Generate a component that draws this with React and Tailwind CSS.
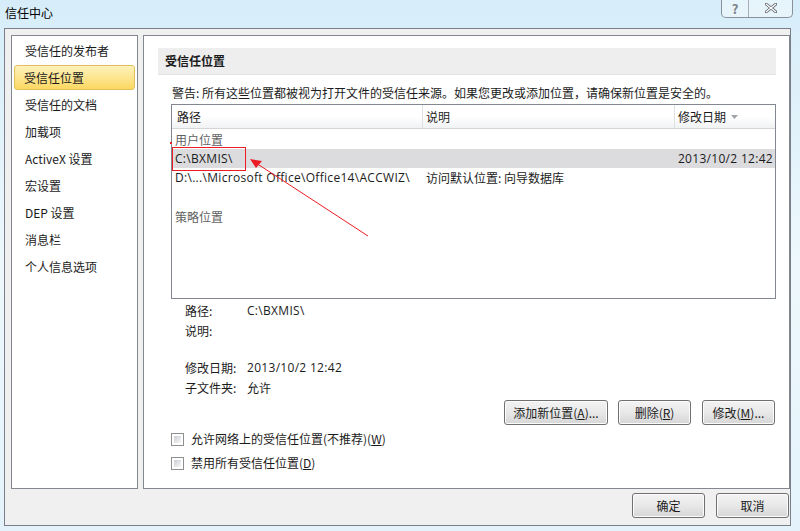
import { useState } from "react";

const navItems = [
	"受信任的发布者",
	"受信任位置",
	"受信任的文档",
	"加载项",
	"ActiveX 设置",
	"宏设置",
	"DEP 设置",
	"消息栏",
	"个人信息选项",
];

// latin text in the dialog is a bit wider than the CJK font's own latin glyphs
const latin = "font-['Open_Sans'] tracking-[0.3px]";

function Button({ className, children }) {
	return (
		<div
			className={
				"h-[25px] flex items-center justify-center rounded-[3px] border border-[#707070] bg-gradient-to-b from-[#f3f3f3] via-[#e8e8e8] to-[#d6d6d6] text-[12px] leading-[16px] text-[#1b1b1b] shadow-[inset_0_0_0_1px_#fcfcfc] " +
				className
			}
		>
			{children}
		</div>
	);
}

function Checkbox({ children }) {
	return (
		<div className="h-[24px] flex items-center">
			<div className="w-[13px] h-[13px] border border-[#8e8f8f] bg-white p-[2px]">
				<div className="w-full h-full bg-gradient-to-br from-[#cbcfd5] to-[#f7f7f7]"></div>
			</div>
			<span className="ml-[7px] text-[12px] leading-[16px] text-[#1b1b1b]">{children}</span>
		</div>
	);
}

export default function App() {
	const [selected, setSelected] = useState(1);

	return (
		<div className="relative w-[800px] h-[531px] overflow-hidden bg-gradient-to-b from-[#d6edf9] via-[#eef8fd] to-[#e4f3fb] font-['Noto_Sans_CJK_SC'] text-[#1b1b1b]">
			{/* title bar */}
			<div className="h-[28px] flex items-start justify-between">
				<div className="pl-[5px] pt-[5px] text-[12px] leading-[16px] text-black">信任中心</div>
				<div className="mr-[7px] -mt-[1px] flex h-[19px] border border-t-0 border-[#8a9099] rounded-b-[5px] bg-white/40">
					<div className="w-[27px] flex items-center justify-center border-r border-[#a7aeb6] text-[13px] font-bold text-[#7d828a] leading-none">?</div>
					<div className="w-[43px] flex items-center justify-center">
						<svg width="12" height="10" viewBox="0 0 12 10">
							<path d="M1 1 L11 9 M11 1 L1 9" stroke="#6d737b" strokeWidth="3" strokeLinecap="square" />
							<path d="M1 1 L11 9 M11 1 L1 9" stroke="#ffffff" strokeWidth="1.2" />
						</svg>
					</div>
				</div>
			</div>

			{/* dialog body */}
			<div className="ml-[4px] w-[787px] h-[498px] border border-[#7a7f87] bg-[#f0f0f0] flex flex-col">
				<div className="flex pt-[6px] pl-[6px] h-[460px]">
					{/* nav */}
					<div className="w-[127px] h-[454px] border border-[#828790] bg-white pt-[1px]">
						{navItems.map((item, i) => (
							<div key={item} className="h-[27px] flex items-center" onClick={() => setSelected(i)}>
								{i === selected ? (
									<div className="mx-[2px] w-full h-[25px] flex items-center pl-[9px] rounded-[3px] border border-[#e2c15d] bg-gradient-to-b from-[#fef1ba] to-[#fcd85f] text-[12px] leading-[16px]">
										{item}
									</div>
								) : (
									<div className="pl-[13px] text-[12px] leading-[16px]">{item}</div>
								)}
							</div>
						))}
					</div>

					{/* content */}
					<div className="ml-[5px] flex-1 h-[454px] border border-[#828790] bg-white pt-[12px] pl-[14px] pr-[13px]">
						<div className="h-[27px] flex items-center pl-[7px] bg-[#eeeeee] border-b border-[#e2e2e2] text-[12px] font-bold leading-[16px]">
							受信任位置
						</div>
						<div className="mt-[10px] ml-[14px] h-[16px] text-[12px] leading-[16px] whitespace-nowrap">
							警告: 所有这些位置都被视为打开文件的受信任来源。如果您更改或添加位置，请确保新位置是安全的。
						</div>

						{/* list */}
						<div className="mt-[3px] ml-[13px] h-[195px] border border-[#828790] text-[12px] leading-[16px]">
							<div className="h-[24px] flex border-b border-[#d5d5d5] bg-gradient-to-b from-white via-white to-[#f1f2f4]">
								<div className="w-[251px] border-r border-[#dfe0e2] pl-[5px] flex items-center">路径</div>
								<div className="w-[252px] border-r border-[#dfe0e2] pl-[3px] flex items-center">说明</div>
								<div className="flex-1 pl-[3px] flex items-center">
									修改日期
									<svg className="ml-[5px]" width="7" height="4" viewBox="0 0 7 4">
										<path d="M0 0 L7 0 L3.5 4 Z" fill="#a0a4a9" />
									</svg>
								</div>
							</div>
							<div className="h-[20px] pt-[3px] pl-[3px] text-[#5f5f5f]">用户位置</div>
							<div className="h-[19px] flex items-center bg-[#dcdcdf]">
								<div className={"w-[252px] pl-[3px] " + latin}>C:\BXMIS\</div>
								<div className="w-[252px]"></div>
								<div className={"flex-1 text-right pr-[2px] whitespace-nowrap " + latin}>2013/10/2 12:42</div>
							</div>
							<div className="h-[19px] flex items-center">
								<div className={"w-[251px] pl-[3px] whitespace-nowrap " + latin}>D:\...\Microsoft Office\Office14\ACCWIZ\</div>
								<div className="pl-[3px]">访问默认位置: 向导数据库</div>
							</div>
							<div className="h-[19px]"></div>
							<div className="h-[20px] pt-[3px] pl-[3px] text-[#5f5f5f]">策略位置</div>
						</div>

						{/* details */}
						<div className="mt-[2px] ml-[27px] text-[12px] leading-[16px]">
							<div className="h-[20px] flex items-center">
								<span className="w-[62px]">路径:</span>
								<span className={latin}>C:\BXMIS\</span>
							</div>
							<div className="h-[20px] flex items-center">
								<span className="w-[62px]">说明:</span>
							</div>
							<div className="h-[17px]"></div>
							<div className="h-[20px] flex items-center">
								<span className="w-[62px]">修改日期:</span>
								<span className={latin}>2013/10/2 12:42</span>
							</div>
							<div className="h-[20px] flex items-center">
								<span className="w-[62px]">子文件夹:</span>
								<span>允许</span>
							</div>
						</div>

						<div className="mt-[2px] flex justify-end pr-[1px]">
							<Button className="w-[104px]">
								添加新位置(<span className="underline">A</span>)...
							</Button>
							<Button className="ml-[10px] w-[73px]">
								删除(<span className="underline">R</span>)
							</Button>
							<Button className="ml-[11px] w-[73px]">
								修改(<span className="underline">M</span>)...
							</Button>
						</div>

						<div className="mt-[2px] ml-[13px]">
							<Checkbox>
								允许网络上的受信任位置(不推荐)(<span className="underline">W</span>)
							</Checkbox>
							<Checkbox>
								禁用所有受信任位置(<span className="underline">D</span>)
							</Checkbox>
						</div>
					</div>
				</div>

				{/* bottom buttons */}
				<div className="flex justify-end pt-[4px] pr-[1px]">
					<Button className="w-[73px]">确定</Button>
					<Button className="ml-[11px] w-[73px]">取消</Button>
				</div>
			</div>

			{/* annotation */}
			<svg className="absolute left-0 top-0 pointer-events-none" width="800" height="531">
				<rect x="172.5" y="147.5" width="73" height="23" fill="none" stroke="#ec1c24" strokeWidth="1" />
				<rect x="170" y="142" width="2" height="2" fill="#ec1c24" />
				<line x1="368" y1="236" x2="256" y2="163" stroke="#ec1c24" strokeWidth="1" />
				<path d="M250 159 L262 161 L256 168 Z" fill="#ec1c24" />
			</svg>
		</div>
	);
}
